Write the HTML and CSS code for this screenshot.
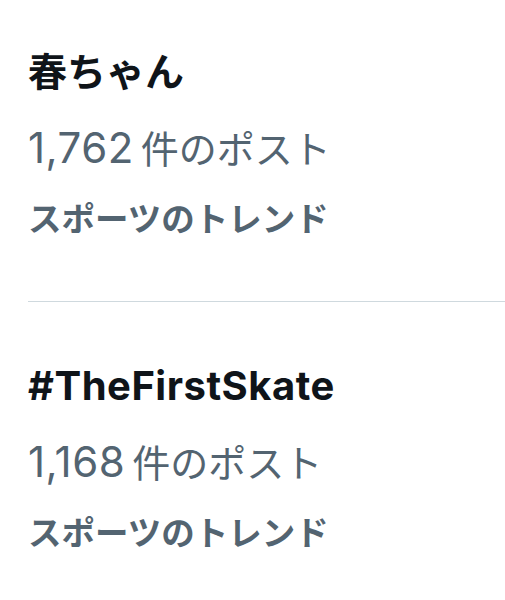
FILE: index.html
```html
<!DOCTYPE html>
<html lang="ja">
<head>
	<meta charset="UTF-8">
	<title>トレンド</title>
	<link rel="stylesheet" href="styles.css">
</head>
<body>

<div class="trends">
	<div class="trend">
		<div class="trend-name">春ちゃん</div>
		<div class="trend-count"><span class="num">1,762</span>件のポスト</div>
		<div class="trend-cat">スポーツのトレンド</div>
	</div>
	<div class="trend">
		<div class="trend-name latin">#TheFirstSkate</div>
		<div class="trend-count"><span class="num">1,168</span>件のポスト</div>
		<div class="trend-cat">スポーツのトレンド</div>
	</div>
</div>

</body>
</html>
```

FILE: styles.css
```css
body{margin: 0;padding: 0;background: #fff;font-family: Inter, "Noto Sans CJK JP", sans-serif;}
.trends{padding-left: 28px;}
.trend{padding: 46px 0 50px;border-top: 1px solid #cfd9de;}
.trend:first-child{padding-top: 34px;border-top: 0;}
.trend-name{font-size: 39px;line-height: 76px;font-weight: 700;color: #0f1419;}
.trend-name.latin{font-size: 40px;letter-spacing: 0.5px;}
.trend-count{font-size: 38px;line-height: 76px;font-weight: 400;color: #536471;}
.trend-count .num{font-size: 42px;letter-spacing: 0.5px;margin-right: 7px;}
.trend-cat{font-size: 33.5px;line-height: 64px;font-weight: 700;color: #536471;}
```
